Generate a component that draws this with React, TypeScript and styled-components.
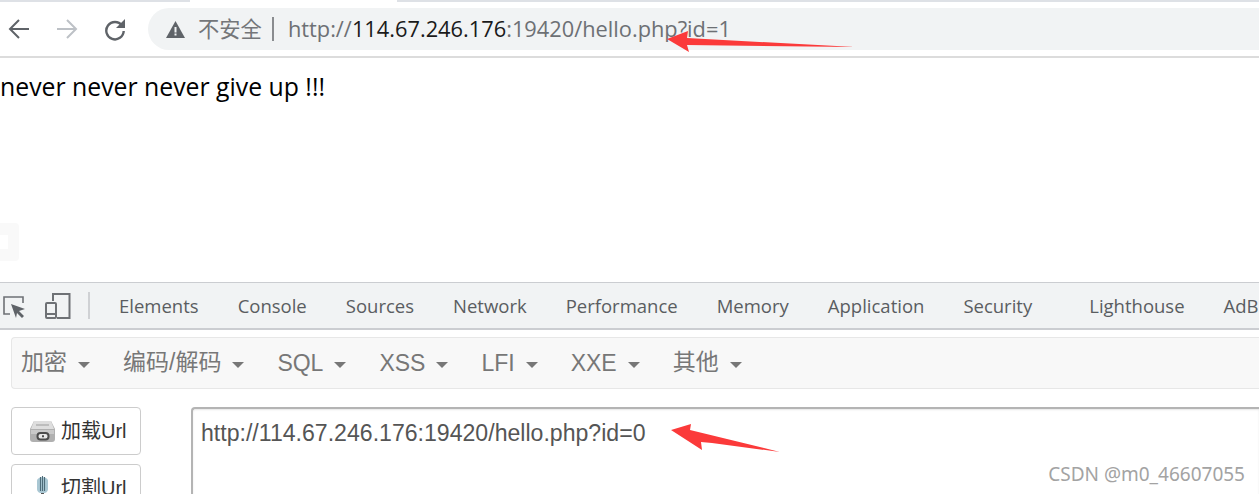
import React from "react";
import styled, { createGlobalStyle } from "styled-components";

const GlobalStyle = createGlobalStyle`
  html, body {
    margin: 0;
    padding: 0;
    background: #fff;
  }
`;

const Page = styled.div`
  position: relative;
  width: 1259px;
  height: 494px;
  overflow: hidden;
  background: #fff;
  font-family: "Open Sans", "Noto Sans CJK SC", sans-serif;
`;

const TabStrip = styled.div`
  display: flex;
  height: 2px;
`;

const TabEdge = styled.div<{ $w?: number }>`
  background: #dee1e6;
  ${({ $w }) => ($w ? `width: ${$w}px;` : "flex: 1;")}
`;

const TabGap = styled.div`
  width: 207px;
`;

const Toolbar = styled.div`
  display: flex;
  align-items: center;
  height: 54px;
  border-bottom: 2px solid #dcdcdc;
  padding-left: 6px;
`;

const NavButton = styled.div`
  width: 26px;
  height: 26px;
  margin-right: 22px;
  display: flex;
  align-items: center;
  justify-content: center;
  &:nth-child(3) {
    margin-right: 20px;
  }
`;

const Omnibox = styled.div`
  flex: 1;
  height: 42px;
  border-radius: 21px 0 0 21px;
  background: #f1f3f4;
  display: flex;
  align-items: center;
  padding-left: 18px;
  font-size: 21.8px;
  color: #6d7074;
`;

const Secure = styled.span`
  margin: 0 0 3px 13px;
  font-size: 21.3px;
  color: #747679;
  font-family: "Noto Sans CJK SC", sans-serif;
`;

const Divider = styled.span`
  width: 2px;
  height: 24px;
  margin: 0 14px 0 10px;
  background: #8a8c8f;
`;

const Address = styled.span`
  margin-bottom: 2px;
`;

const Host = styled.span`
  color: #1a1a1a;
`;

const Content = styled.div`
  height: 224px;
  padding-top: 11px;
  box-sizing: border-box;
  font-size: 24.8px;
  line-height: 34px;
  color: #000;
`;

const FaintBlock = styled.div`
  position: absolute;
  left: 0;
  top: 223px;
  width: 19px;
  height: 38px;
  border-radius: 0 4px 4px 0;
  background: #f9f9f9;
  &::after {
    content: "";
    position: absolute;
    left: 0;
    top: 12px;
    width: 8px;
    height: 14px;
    background: #fff;
  }
`;

const DevTabs = styled.div`
  display: flex;
  align-items: center;
  height: 45px;
  background: #f1f3f4;
  border-top: 1px solid #cbcdd1;
  border-bottom: 2px solid #cbcdd1;
  padding-left: 2px;
  white-space: nowrap;
  overflow: hidden;
`;

const DevIcon = styled.div`
  display: flex;
  flex: none;
  margin-right: 19px;
  &:nth-child(2) {
    margin-right: 17px;
  }
`;

const DevDivider = styled.span`
  flex: none;
  width: 2px;
  height: 27px;
  background: #cfd1d4;
  margin-right: 29px;
`;

const DevTab = styled.span<{ $gap?: number }>`
  flex: none;
  font-size: 18.5px;
  color: #5a5d61;
  margin-right: ${({ $gap }) => $gap ?? 39}px;
`;

const HackBar = styled.div`
  display: flex;
  align-items: center;
  height: 52px;
  margin: 7px 0 0 11px;
  box-sizing: border-box;
  background: #f8f8f8;
  border: 1px solid #e7e7e7;
  border-right: 0;
  border-radius: 4px 0 0 4px;
  padding-left: 9px;
`;

const MenuItem = styled.span`
  display: flex;
  align-items: center;
  margin-right: 33px;
  &::after {
    content: "";
    margin-left: 11px;
    margin-top: 3px;
    border-top: 6px solid #777;
    border-left: 6px solid transparent;
    border-right: 6px solid transparent;
  }
`;

const MenuLabel = styled.span<{ $cjk: boolean }>`
  font-family: "Liberation Sans", "Noto Sans CJK SC", sans-serif;
  font-size: 23px;
  color: #777;
  margin-bottom: ${({ $cjk }) => ($cjk ? 6 : 0)}px;
`;

const Workspace = styled.div`
  display: flex;
  margin: 18px 0 0 11px;
`;

const SideButtons = styled.div`
  display: flex;
  flex-direction: column;
  gap: 9px;
  width: 130px;
  margin-right: 50px;
`;

const SideButton = styled.div`
  flex: none;
  height: 48px;
  box-sizing: border-box;
  display: flex;
  align-items: center;
  padding-left: 17px;
  gap: 5px;
  background: #fff;
  border: 1px solid #ccc;
  border-radius: 4px;
  font-family: "Liberation Sans", "Noto Sans CJK SC", sans-serif;
  font-size: 20px;
  color: #333;
`;

const ButtonLabel = styled.span`
  margin-bottom: 4px;
`;

const UrlArea = styled.div`
  flex: 1;
  height: 120px;
  box-sizing: border-box;
  border: 2px solid #b4b4b4;
  border-right: 0;
  border-radius: 4px 0 0 0;
  padding: 9px 8px;
  font-family: "Liberation Sans", sans-serif;
  font-size: 23.1px;
  line-height: 30px;
  color: #555;
  box-shadow: inset 0 1px 2px rgba(0, 0, 0, 0.1);
`;

const Arrow = styled.svg<{ $x: number; $y: number }>`
  position: absolute;
  left: ${({ $x }) => $x}px;
  top: ${({ $y }) => $y}px;
`;

const Watermark = styled.div`
  position: absolute;
  right: 14px;
  top: 462px;
  font-family: "Noto Sans", sans-serif;
  font-size: 19px;
  line-height: 24px;
  color: #a3a3a3;
`;

const devTabs: [string, number?][] = [
  ["Elements"],
  ["Console"],
  ["Sources"],
  ["Network"],
  ["Performance"],
  ["Memory"],
  ["Application"],
  ["Security", 57],
  ["Lighthouse"],
  ["AdBlock"],
];

const menus = ["加密", "编码/解码", "SQL", "XSS", "LFI", "XXE", "其他"];
const latinMenus = ["SQL", "XSS", "LFI", "XXE"];

const App: React.FC = () => {
  return (
    <Page>
      <GlobalStyle />
      <TabStrip>
        <TabEdge $w={190} />
        <TabGap />
        <TabEdge />
      </TabStrip>
      <Toolbar>
        <NavButton>
          <svg width="24" height="24" viewBox="0 0 24 24" fill="none" stroke="#5f6368" strokeWidth="2">
            <path d="M22 12H3M12 3l-9 9 9 9" />
          </svg>
        </NavButton>
        <NavButton>
          <svg width="24" height="24" viewBox="0 0 24 24" fill="none" stroke="#bdc1c6" strokeWidth="2">
            <path d="M2 12h19M12 3l9 9-9 9" />
          </svg>
        </NavButton>
        <NavButton>
          <svg width="24" height="24" viewBox="0 0 24 24" fill="none">
            <path d="M19 8.500A8.700 8.700 0 1 0 20.700 14" stroke="#5f6368" strokeWidth="2.4" />
            <path d="M22 2v9h-9z" fill="#5f6368" />
          </svg>
        </NavButton>
        <Omnibox>
          <svg width="19" height="17" viewBox="0 0 19 17">
            <path d="M9.500 0L19 17H0z" fill="#5f6368" />
            <rect x="8.500" y="6" width="2" height="5.500" fill="#f1f3f4" />
            <rect x="8.500" y="12.500" width="2" height="2" fill="#f1f3f4" />
          </svg>
          <Secure>不安全</Secure>
          <Divider />
          <Address>
            http://<Host>114.67.246.176</Host>:19420/hello.php?id=1
          </Address>
        </Omnibox>
      </Toolbar>
      <Content>never never never give up !!!</Content>
      <FaintBlock />
      <DevTabs>
        <DevIcon>
          <svg width="24" height="24" viewBox="0 0 24 24" fill="none">
            <path d="M8 20H2V3h19v6" stroke="#6e7175" strokeWidth="1.600" />
            <path d="M9 10l14 5-6 2 5 5-2 2-5-5-1 5z" fill="#5f6368" />
          </svg>
        </DevIcon>
        <DevIcon>
          <svg width="26" height="28" viewBox="0 0 26 28" fill="none" stroke="#6e7175" strokeWidth="2">
            <path d="M8 9V2h16.500v24H12" />
            <rect x="1" y="11" width="10" height="15" rx="1" />
            <path d="M1 22h10" />
          </svg>
        </DevIcon>
        <DevDivider />
        {devTabs.map(([name, gap]) => (
          <DevTab key={name} $gap={gap}>
            {name}
          </DevTab>
        ))}
      </DevTabs>
      <HackBar>
        {menus.map((m) => (
          <MenuItem key={m}>
            <MenuLabel $cjk={!latinMenus.includes(m)}>{m}</MenuLabel>
          </MenuItem>
        ))}
      </HackBar>
      <Workspace>
        <SideButtons>
          <SideButton>
            <svg width="27" height="24" viewBox="0 0 27 24">
              <path d="M5 2h17l4 8v10a3 3 0 0 1-3 3H4a3 3 0 0 1-3-3V10z" fill="#b0b0b0" />
              <path d="M5 2h17l3 8H2z" fill="#dedede" />
              <path d="M7 5h13v2H7z" fill="#bdbdbd" />
              <path d="M2 11h23v4H2z" fill="#c9c9c9" />
              <rect x="8.500" y="14" width="11" height="6.500" rx="3" fill="#e8e8e8" stroke="#4c4c4c" strokeWidth="2" />
              <path d="M13 17.200h2" stroke="#4c4c4c" strokeWidth="2" />
            </svg>
            <ButtonLabel>加载Url</ButtonLabel>
          </SideButton>
          <SideButton>
            <svg width="27" height="24" viewBox="0 0 27 24">
              <path d="M8 5c0-5 11-5 11 0v8c0 3-3 4-3 4h-5s-3-1-3-4z" fill="#a9c7d3" />
              <path d="M11.500 1v14M13.500 0v15M15.500 1v14" stroke="#4d6b78" strokeWidth="1.100" />
              <rect x="12" y="17" width="3" height="7" fill="#555" />
            </svg>
            <ButtonLabel>切割Url</ButtonLabel>
          </SideButton>
        </SideButtons>
        <UrlArea>http://114.67.246.176:19420/hello.php?id=0</UrlArea>
      </Workspace>
      <Arrow $x={664} $y={28} width="192" height="24" viewBox="0 0 192 24">
        <path d="M3 11L24 3l-1 7 168 9-168-2 2 7z" fill="#fb3a3a" />
      </Arrow>
      <Arrow $x={668} $y={422} width="114" height="32" viewBox="0 0 114 32">
        <path d="M3 8L23 2l-1 6 90 22-68-9-11-1 1 8z" fill="#fb3a3a" />
      </Arrow>
      <Watermark>CSDN @m0_46607055</Watermark>
    </Page>
  );
};

export default App;
